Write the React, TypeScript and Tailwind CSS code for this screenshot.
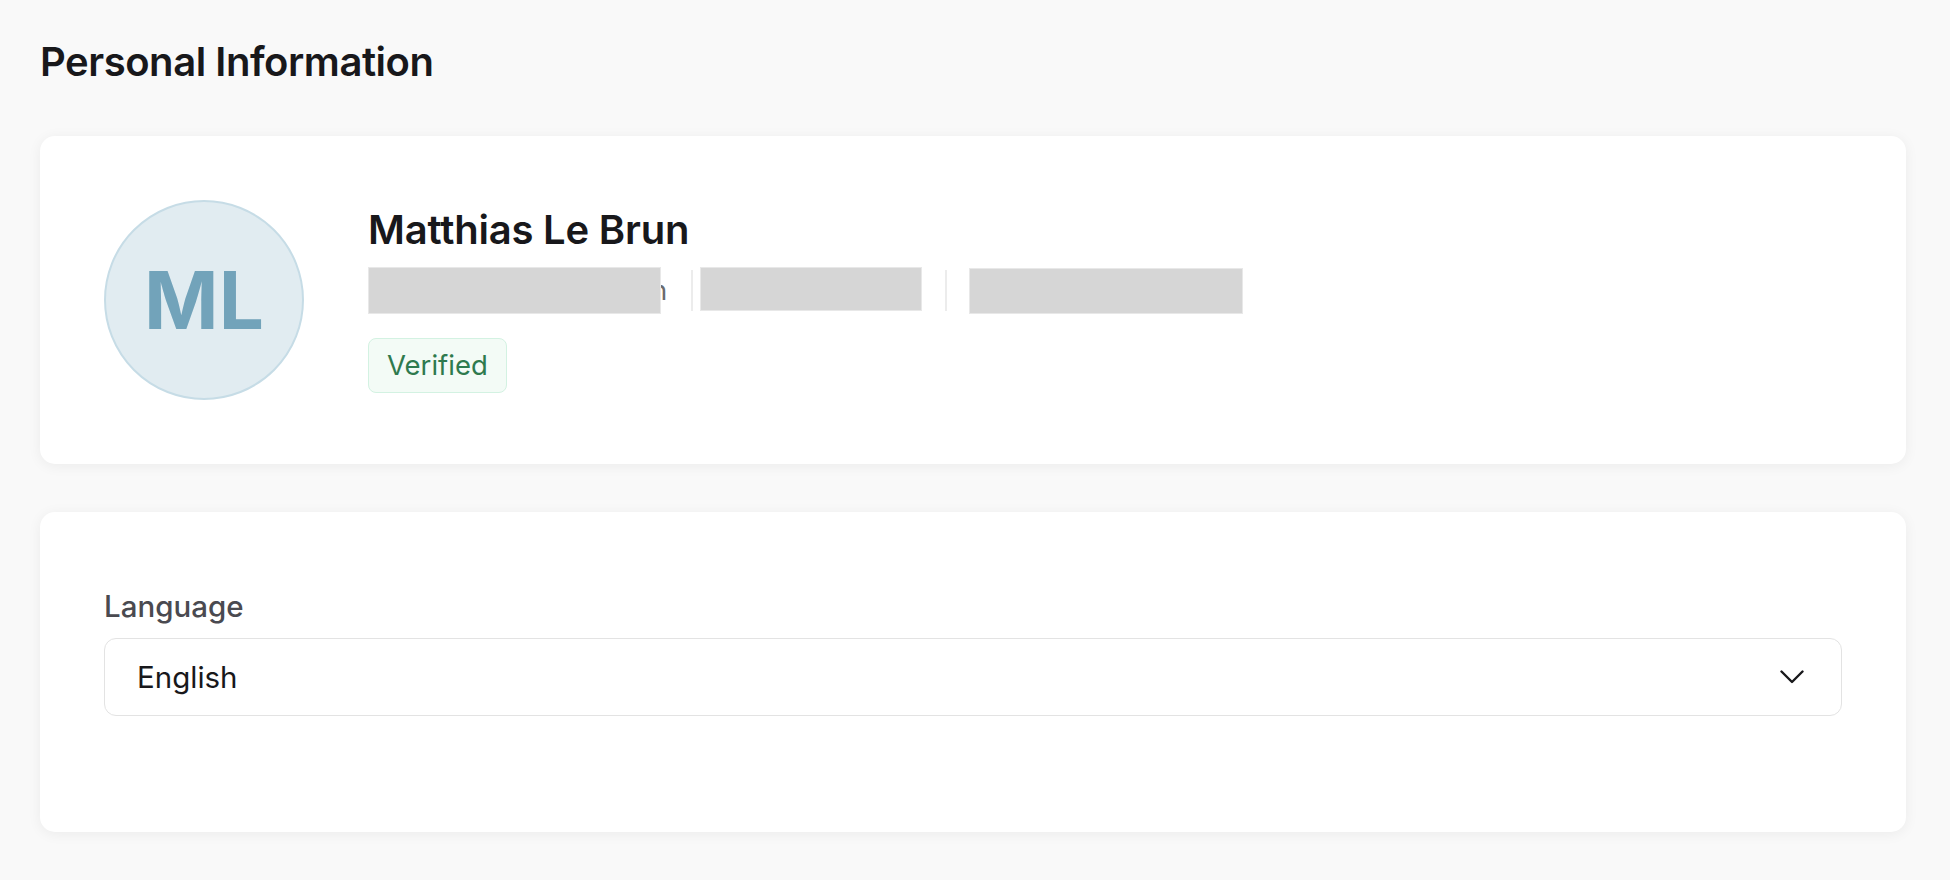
import { useState } from 'react';

// redacted contact details, drawn as grey blocks like the source capture
function ContactRow() {
  return (
    <div className="flex h-[41px] items-center">
      <div className="flex items-center">
        <div className="relative z-10 h-[47px] w-[293px] border border-[#e8e8e8] bg-[#d6d6d6]" />
        <span className="-ml-[10px] text-[27.5px] leading-[41px] text-[#6b6b6b]">n</span>
      </div>
      <div className="ml-[24px] h-[41px] w-[2px] bg-[#ececec]" />
      <div className="ml-[7px] h-[44px] w-[222px] -translate-y-[2px] border border-[#e8e8e8] bg-[#d6d6d6]" />
      <div className="ml-[23px] h-[41px] w-[2px] bg-[#ececec]" />
      <div className="ml-[22px] h-[46px] w-[274px] border border-[#e8e8e8] bg-[#d6d6d6]" />
    </div>
  );
}

function Avatar({ initials }: { initials: string }) {
  return (
    <div className="flex h-[200px] w-[200px] shrink-0 items-center justify-center rounded-full border-2 border-[#c6dce6] bg-[#e1ecf1]">
      <span className="text-[80px] font-bold leading-none text-[#72a3ba]">{initials}</span>
    </div>
  );
}

export default function App() {
  const [language] = useState<string>('English');

  return (
    <main
      className="min-h-screen bg-[#f9f9f9] pl-10 pr-[44px] pt-[38px] text-[#18181b]"
      style={{ fontFamily: 'Inter, "Noto Sans", sans-serif' }}
    >
      <h1 className="text-[40px] font-semibold leading-[48px] tracking-[-0.45px]">Personal Information</h1>

      {/* profile card */}
      <section className="mt-[50px] flex items-start gap-16 rounded-[15px] bg-white px-16 py-16 shadow-[0_2px_14px_rgba(0,0,0,0.06)]">
        <Avatar initials="ML" />
        <div className="flex flex-col items-start pt-[5px]">
          <h2 className="text-[40px] font-semibold leading-[50px] tracking-[-0.2px]">Matthias Le Brun</h2>
          <div className="mt-[15px]">
            <ContactRow />
          </div>
          <span className="mt-[27px] rounded-[8px] border-[1.5px] border-[#d3f2e2] bg-[#f3fbf6] px-[18px] py-[6px] text-[27.5px] leading-[41px] text-[#2e7a4e]">
            Verified
          </span>
        </div>
      </section>

      {/* preferences card */}
      <section className="mt-12 h-[320px] rounded-[15px] bg-white px-16 pt-[76px] shadow-[0_2px_14px_rgba(0,0,0,0.06)]">
        <label className="block text-[29.5px] font-medium leading-[36px] text-[#4a4a50]">Language</label>
        <button
          type="button"
          className="mt-[14px] flex h-[78px] w-full items-center justify-between rounded-[12px] border-[1.5px] border-[#e3e3e3] bg-white pl-[32px] pr-[37px] text-left"
        >
          <span className="text-[29.5px] leading-[40px] text-[#18181b]">{language}</span>
          <svg width="24" height="14" viewBox="0 0 24 14" fill="none" className="text-[#18181b]">
            <path d="M1.5 1.5 12 12 22.5 1.5" stroke="currentColor" strokeWidth="2.4" strokeLinecap="round" strokeLinejoin="round" />
          </svg>
        </button>
      </section>
    </main>
  );
}
